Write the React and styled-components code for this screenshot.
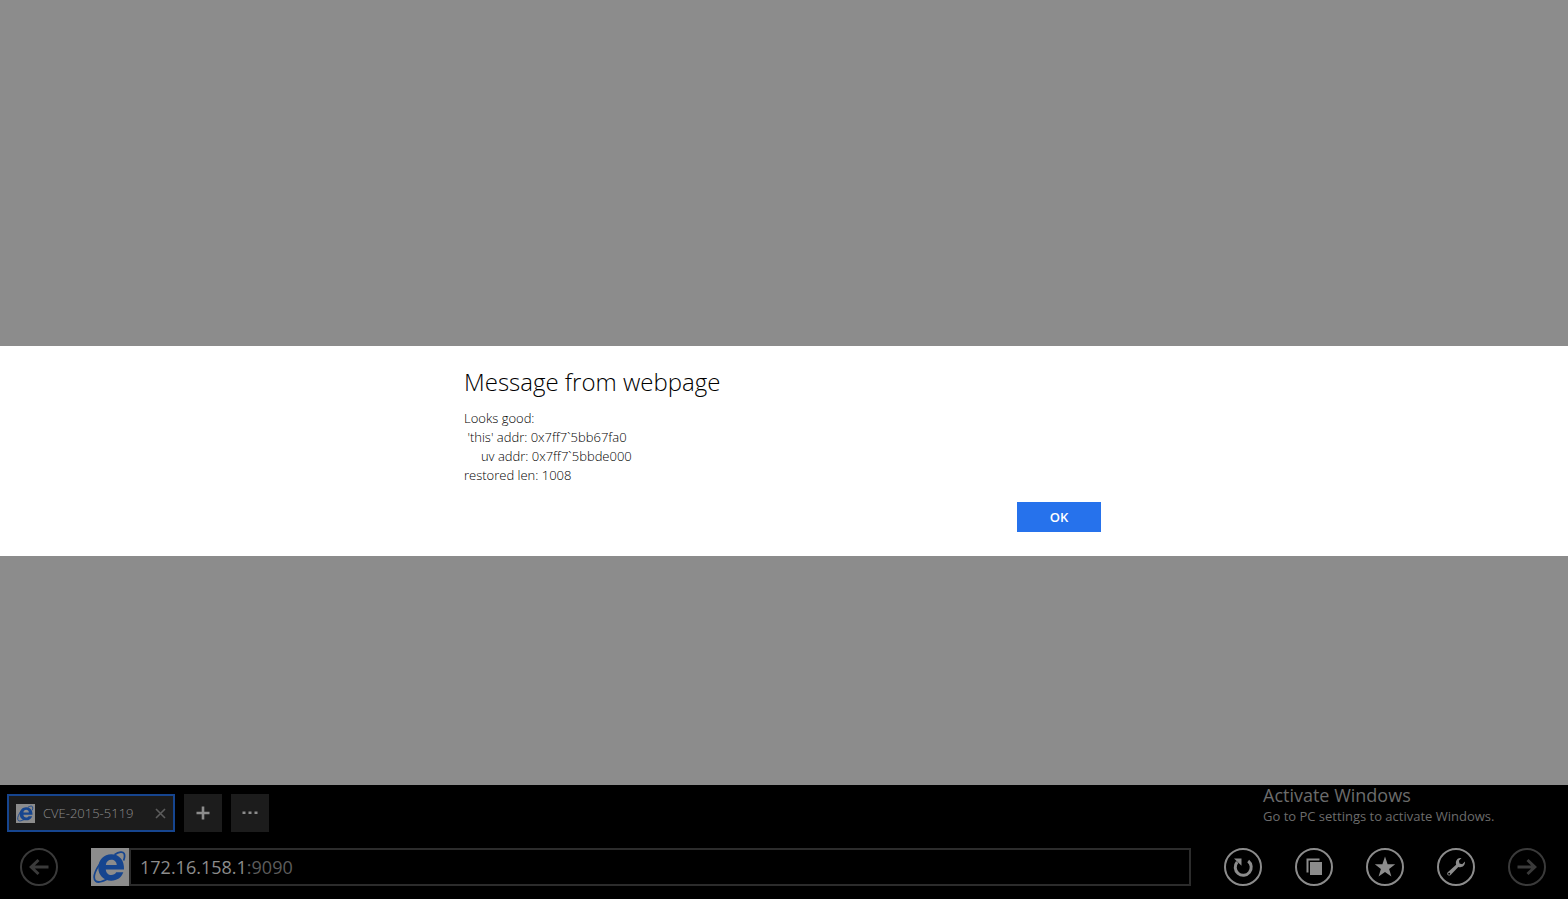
import styled, { createGlobalStyle } from "styled-components";

const message = [
  "Looks good:",
  " 'this' addr: 0x7ff7`5bb67fa0",
  "     uv addr: 0x7ff7`5bbde000",
  "restored len: 1008",
].join("\n");

const IeLogo = ({ size }) => (
  <svg width={size} height={size} viewBox="0 0 38 38" aria-hidden="true">
    <rect width="38" height="38" fill="#8c8c8c" />
    <path
      fill="#16458f"
      d="M33 21.500H14.800C15 25 17.300 27 20.300 27C22.500 27 24.300 26.100 25.200 24.300H32.300C30.600 29.500 26.200 32.700 20.200 32.700C12.800 32.700 7.300 27.200 7.300 19.800C7.300 12 13 6.300 20.300 6.300C28.500 6.300 33.500 12.300 33 21.500ZM14.800 17H25.800C25.600 13.700 23.400 11.700 20.300 11.700C17.300 11.700 15.200 13.700 14.800 17Z"
    />
    <path
      fill="none"
      stroke="#16458f"
      strokeWidth="1.800"
      d="M23.500 6.800C28 3.800 31.800 3.400 33 5.400C33.800 6.800 33.700 9.500 32.600 12.500M18 9C13 11.500 9.500 14.500 7 18.600C3.500 24.500 2.200 30.500 4.600 33C7 35 12 33.500 16.800 30.800"
    />
  </svg>
);

const icons = {
  back: <path d="M28.500 19H11M18.500 12L11.200 19L18.500 26" fill="none" stroke="currentColor" strokeWidth="3" />,
  forward: <path d="M9.500 19H27M19.500 12L26.800 19L19.500 26" fill="none" stroke="currentColor" strokeWidth="3" />,
  refresh: (
    <>
      <path d="M24.200 13A8 8 0 1 1 13.200 14" fill="none" stroke="currentColor" strokeWidth="3" />
      <path d="M10 10.500H17.500V17.800Z" fill="currentColor" />
    </>
  ),
  pages: (
    <>
      <path d="M12.500 24.500V11.500H24.500" fill="none" stroke="currentColor" strokeWidth="2" />
      <path d="M15 14H27V27H15Z" fill="currentColor" />
    </>
  ),
  star: (
    <path
      d="M19 8.500L21.600 16.200H29.200L23.100 21L25.400 28.500L19 24L12.600 28.500L14.900 21L8.800 16.200H16.400Z"
      fill="currentColor"
    />
  ),
  tools: (
    <path
      d="M24.500 10C22 9.400 19.200 11 18.900 14C18.800 15.200 18.900 16 19.100 16.700L10.800 24.200C9 26.200 11.800 28.700 13.600 27L21.300 18.900C24.300 20.200 28.200 18.300 28 13.600L25.200 16.200L22.500 15.500L21.900 12.700ZM12.200 24.700A1 1 0 1 1 12.100 26.700A1 1 0 1 1 12.200 24.700Z"
      fill="currentColor"
      fillRule="evenodd"
    />
  ),
};

const RoundButton = ({ icon, label, dim }) => (
  <Round type="button" aria-label={label} $dim={dim}>
    <svg width="38" height="38" viewBox="0 0 38 38">
      <circle cx="19" cy="19" r="18" fill="none" stroke="currentColor" strokeWidth="2" />
      {icons[icon]}
    </svg>
  </Round>
);

const App = () => {
  return (
    <Screen>
      <GlobalStyle />
      <Page />
      <Chrome>
        <Tabs>
          <Tab>
            <IeLogo size={19} />
            <TabTitle href="#">CVE-2015-5119</TabTitle>
            <CloseButton type="button" aria-label="Close tab">
              <svg width="11" height="11" viewBox="0 0 11 11">
                <path d="M1 1L10 10M10 1L1 10" stroke="currentColor" strokeWidth="1.600" />
              </svg>
            </CloseButton>
          </Tab>
          <SquareButton type="button" aria-label="New tab">
            <svg width="14" height="14" viewBox="0 0 14 14">
              <path d="M7 .5V13.500M.5 7H13.500" stroke="currentColor" strokeWidth="2.600" />
            </svg>
          </SquareButton>
          <SquareButton type="button" aria-label="Tab tools">
            <svg width="16" height="4" viewBox="0 0 16 4">
              <path d="M.5 .5H3.500V3H.5ZM6.500 .5H9.500V3H6.500ZM12.500 .5H15.500V3H12.500Z" fill="currentColor" />
            </svg>
          </SquareButton>
        </Tabs>
        <NavBar>
          <RoundButton icon="back" label="Back" dim />
          <AddressBar>
            <IeLogo size={38} />
            <Address href="#">
              172.16.158.1<Port>:9090</Port>
            </Address>
          </AddressBar>
          <RoundButton icon="refresh" label="Refresh" />
          <RoundButton icon="pages" label="Pages" />
          <RoundButton icon="star" label="Favorites" />
          <RoundButton icon="tools" label="Page tools" />
          <RoundButton icon="forward" label="Forward" dim />
        </NavBar>
        <Watermark>
          <h2>Activate Windows</h2>
          <p>Go to PC settings to activate Windows.</p>
        </Watermark>
      </Chrome>
      <Overlay>
        <Dialog role="alertdialog" aria-labelledby="dialog-title">
          <DialogBody>
            <h1 id="dialog-title">Message from webpage</h1>
            <Message>{message}</Message>
            <OkButton type="button">OK</OkButton>
          </DialogBody>
        </Dialog>
      </Overlay>
    </Screen>
  );
};

const GlobalStyle = createGlobalStyle`
  * {
    box-sizing: border-box;
    margin: 0;
  }
  body {
    background: #000;
    font-family: "Open Sans", "Noto Sans", sans-serif;
  }
  button {
    display: flex;
    align-items: center;
    justify-content: center;
    padding: 0;
    border: none;
    background: none;
    font-family: inherit;
    cursor: pointer;
  }
  svg {
    display: block;
    flex-shrink: 0;
  }
`;

const Screen = styled.div`
  display: flex;
  flex-direction: column;
  min-height: 100vh;
`;

const Page = styled.main`
  flex: 1;
  background: #8c8c8c;
`;

const Chrome = styled.footer`
  position: relative;
  padding: 9px 22px 13px 7px;
  background: #000;
`;

const Tabs = styled.div`
  display: flex;
  gap: 9px;
`;

const Tab = styled.div`
  display: flex;
  align-items: center;
  width: 168px;
  height: 38px;
  padding: 0 7px;
  border: 2px solid #16458f;
  background: #1c1c1c;
`;

const TabTitle = styled.a`
  flex: 1;
  margin-left: 8px;
  color: #8c8c8c;
  font-size: 13px;
  font-weight: 300;
  text-decoration: none;
`;

const CloseButton = styled.button`
  color: #5c5c5c;
`;

const SquareButton = styled.button`
  width: 38px;
  height: 38px;
  background: #1c1c1c;
  color: #8c8c8c;
`;

const NavBar = styled.nav`
  display: flex;
  gap: 33px;
  margin-top: 16px;
  padding-left: 13px;
`;

const Round = styled.button`
  color: ${({ $dim }) => ($dim ? "#3a3a3a" : "#8c8c8c")};
`;

const AddressBar = styled.div`
  display: flex;
  flex: 1;
`;

const Address = styled.a`
  flex: 1;
  padding-left: 9px;
  border: 2px solid #2c2c2c;
  color: #8c8c8c;
  font-size: 18px;
  line-height: 34px;
  text-decoration: none;
`;

const Port = styled.span`
  color: #5c5c5c;
`;

const Watermark = styled.div`
  position: absolute;
  top: 0;
  right: 66px;
  width: 239px;
  color: #6c6c6c;
  white-space: nowrap;
  h2 {
    font-size: 18px;
    font-weight: 400;
    line-height: 20px;
  }
  p {
    font-size: 13px;
    line-height: 22px;
  }
`;

const Overlay = styled.div`
  position: fixed;
  inset: 0;
  display: flex;
  align-items: center;
  padding-top: 2px;
`;

const Dialog = styled.section`
  width: 100%;
  padding: 20px 0 24px;
  background: #fff;
`;

const DialogBody = styled.div`
  max-width: 640px;
  margin: 0 auto;
  padding-right: 3px;
  color: #000;
  h1 {
    font-size: 24px;
    font-weight: 300;
    line-height: 32px;
  }
`;

const Message = styled.p`
  margin-top: 11px;
  font-size: 13px;
  font-weight: 300;
  line-height: 19px;
  white-space: pre-wrap;
`;

const OkButton = styled.button`
  width: 84px;
  height: 30px;
  margin: 17px 0 0 auto;
  background: #2672ec;
  color: #fff;
  font-size: 13px;
  font-weight: 600;
`;

export default App;
